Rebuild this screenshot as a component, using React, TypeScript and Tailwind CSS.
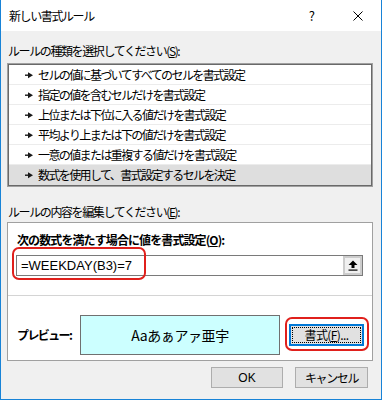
import React from 'react';

const rules = [
  'セルの値に基づいてすべてのセルを書式設定',
  '指定の値を含むセルだけを書式設定',
  '上位または下位に入る値だけを書式設定',
  '平均より上または下の値だけを書式設定',
  '一意の値または重複する値だけを書式設定',
  '数式を使用して、書式設定するセルを決定',
];

const Pointer = () => (
  <svg width="8" height="8" viewBox="0 0 8 8" className="shrink-0">
    <rect x="0" y="3.5" width="4" height="1.4" fill="#1a1a1a" />
    <polygon points="3,1.2 8,4.2 3,7.2" fill="#1a1a1a" />
  </svg>
);

const App: React.FC = () => {
  const selected = 5;

  return (
    <div className="h-[400px] w-[382px] overflow-hidden border-x border-b border-[#1883d7] bg-[#f0f0f0] font-['Noto_Sans_CJK_JP','Noto_Sans',sans-serif] text-[12px] text-[#000]">
      {/* title bar */}
      <div className="flex h-[31px] items-center bg-white">
        <span className="ml-[8px] tracking-[-1.4px]">新しい書式ルール</span>
        <span className="ml-auto mr-[38px] text-[13px]">?</span>
        <svg width="10" height="10" viewBox="0 0 10 10" className="mr-[18px]">
          <path d="M0.5 0.5 L9.5 9.5 M9.5 0.5 L0.5 9.5" stroke="#000" strokeWidth="1" />
        </svg>
      </div>

      <div className="ml-[7px] mt-[12px] leading-[16px] tracking-[-1.4px]">
        ルールの種類を選択してください(<span className="underline">S</span>):
      </div>

      {/* rule list */}
      <div className="ml-[6px] mt-[4px] w-[366px] border border-[#a0a0a0]">
        <div className="border border-[#696969] bg-white">
          {rules.map((r, i) => (
            <div
              key={r}
              className={`flex h-[20px] items-center gap-[5px] pl-[16px] leading-[16px] tracking-[-1.6px] ${
                i < rules.length - 1 ? 'border-b border-[#ececec]' : ''
              } ${i === selected ? 'bg-[#dedede]' : ''}`}
            >
              <Pointer />
              <span>{r}</span>
            </div>
          ))}
        </div>
      </div>

      <div className="ml-[7px] mt-[17px] leading-[16px] tracking-[-1.4px]">
        ルールの内容を編集してください(<span className="underline">E</span>):
      </div>

      {/* rule description */}
      <div className="relative ml-[6px] mt-[2px] h-[139px] w-[366px] border border-[#a0a0a0] bg-white">
        <div className="pl-[9px] pt-[9px] font-bold leading-[16px] tracking-[-0.9px]">
          次の数式を満たす場合に値を書式設定(<span className="underline">O</span>):
        </div>
        <div className="ml-[8px] mt-[7px] flex h-[21px] w-[347px] items-center border border-[#7a7a7a]">
          <div className="flex-1 pl-[4px] font-['Liberation_Sans',sans-serif] text-[13px] leading-[16px]">
            =WEEKDAY(B3)=7
          </div>
          <div className="flex h-[19px] w-[19px] items-center justify-center border-2 border-[#cccccc] bg-[#f0f0f0]">
            <svg width="10" height="11" viewBox="0 0 10 11">
              <polygon points="5,0.5 9.5,5 6.5,5 6.5,8 3.5,8 3.5,5 0.5,5" fill="#000" />
              <rect x="0.5" y="9.5" width="9" height="1.2" fill="#000" />
            </svg>
          </div>
        </div>
        <div className="mt-[19px] border-t border-[#d4d4d4]" />
        <div className="mt-[19px] flex items-center">
          <span className="ml-[9px] w-[63px] font-bold tracking-[-1.6px]">プレビュー:</span>
          <div className="flex h-[40px] w-[200px] items-center justify-center border border-[#707070] bg-[#ccffff] text-[14px] tracking-[-0.4px]">
            Aaあぁアァ亜宇
          </div>
          <button className="ml-[9px] flex h-[22px] w-[75px] items-center justify-center border-2 border-[#0078d7] bg-[#e1e1e1] p-[1px]">
            <span className="flex h-full w-full items-center justify-center border border-dotted border-[#000] leading-[14px] tracking-[-0.6px]">
              書式(<span className="underline">F</span>)...
            </span>
          </button>
        </div>

        {/* annotations */}
        <div className="pointer-events-none absolute left-[4px] top-[24px] h-[33px] w-[134px] rounded-[7px] border-2 border-[#e0201c]" />
        <div className="pointer-events-none absolute left-[277px] top-[94px] h-[34px] w-[84px] rounded-[7px] border-2 border-[#e0201c]" />
      </div>

      {/* dialog buttons */}
      <div className="mr-[13px] mt-[6px] flex justify-end gap-[12px]">
        <button className="flex h-[21px] w-[72px] items-center justify-center border border-[#adadad] bg-[#e1e1e1] font-['Liberation_Sans',sans-serif]">
          OK
        </button>
        <button className="flex h-[21px] w-[73px] items-center justify-center border border-[#adadad] bg-[#e1e1e1] tracking-[-1.4px]">
          キャンセル
        </button>
      </div>
    </div>
  );
};

export default App;
